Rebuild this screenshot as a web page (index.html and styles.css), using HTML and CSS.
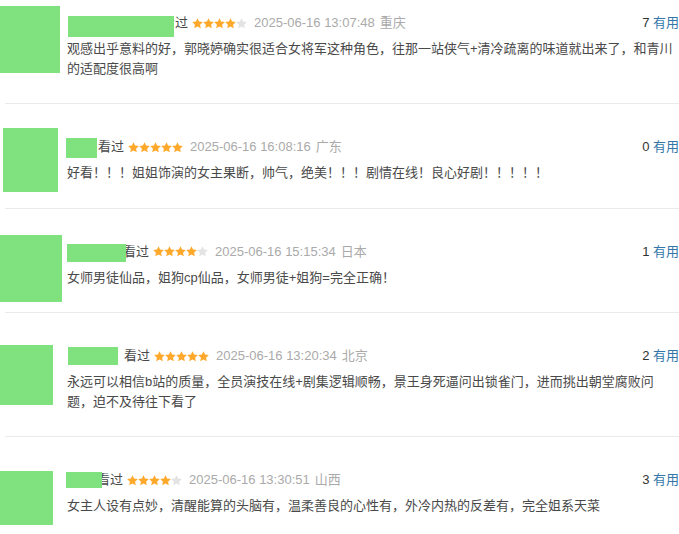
FILE: index.html
```html
<!DOCTYPE html>
<html>
	<head>
		<meta charset="UTF-8">
		<title>短评</title>
		<link rel="stylesheet" href="styles.css">
	</head>
	<body>
		<!-- 星星图形，只定义一次 -->
		<svg class="defs" width="0" height="0">
			<defs>
				<symbol id="star" viewBox="0 0 11 11">
					<polygon points="5.5,0.2 7.09,3.62 10.83,4.07 8.07,6.63 8.79,10.33 5.5,8.5 2.21,10.33 2.93,6.63 0.17,4.07 3.91,3.62"/>
				</symbol>
			</defs>
		</svg>

		<div class="list">
			<!-- 第一条 -->
			<div class="item">
				<div class="pic"><div class="avatar av1"></div></div>
				<div class="main">
					<div class="info">
						<span class="name nm1"></span><span class="watched">看过</span>
						<svg class="stars" width="55" height="11" viewBox="0 0 55 11">
							<use href="#star" x="0" width="11" height="11" class="on"/><use href="#star" x="11" width="11" height="11" class="on"/><use href="#star" x="22" width="11" height="11" class="on"/><use href="#star" x="33" width="11" height="11" class="on"/><use href="#star" x="44" width="11" height="11" class="off"/>
						</svg>
						<span class="time">2025-06-16 13:07:48</span>
						<span class="loc">重庆</span>
						<span class="votes"><span class="num">7</span> <a href="javascript:;">有用</a></span>
					</div>
					<p class="text">观感出乎意料的好，郭晓婷确实很适合女将军这种角色，往那一站侠气+清冷疏离的味道就出来了，和青川的适配度很高啊</p>
				</div>
			</div>

			<!-- 第二条 -->
			<div class="item">
				<div class="pic"><div class="avatar av2"></div></div>
				<div class="main">
					<div class="info">
						<span class="name nm2"></span><span class="watched">看过</span>
						<svg class="stars" width="55" height="11" viewBox="0 0 55 11">
							<use href="#star" x="0" width="11" height="11" class="on"/><use href="#star" x="11" width="11" height="11" class="on"/><use href="#star" x="22" width="11" height="11" class="on"/><use href="#star" x="33" width="11" height="11" class="on"/><use href="#star" x="44" width="11" height="11" class="on"/>
						</svg>
						<span class="time">2025-06-16 16:08:16</span>
						<span class="loc">广东</span>
						<span class="votes"><span class="num">0</span> <a href="javascript:;">有用</a></span>
					</div>
					<p class="text">好看！！！姐姐饰演的女主果断，帅气，绝美！！！剧情在线！良心好剧！！！！！</p>
				</div>
			</div>

			<!-- 第三条 -->
			<div class="item">
				<div class="pic"><div class="avatar av3"></div></div>
				<div class="main">
					<div class="info">
						<span class="name nm3"></span><span class="watched">看过</span>
						<svg class="stars" width="55" height="11" viewBox="0 0 55 11">
							<use href="#star" x="0" width="11" height="11" class="on"/><use href="#star" x="11" width="11" height="11" class="on"/><use href="#star" x="22" width="11" height="11" class="on"/><use href="#star" x="33" width="11" height="11" class="on"/><use href="#star" x="44" width="11" height="11" class="off"/>
						</svg>
						<span class="time">2025-06-16 15:15:34</span>
						<span class="loc">日本</span>
						<span class="votes"><span class="num">1</span> <a href="javascript:;">有用</a></span>
					</div>
					<p class="text">女师男徒仙品，姐狗cp仙品，女师男徒+姐狗=完全正确！</p>
				</div>
			</div>

			<!-- 第四条 -->
			<div class="item">
				<div class="pic"><div class="avatar av4"></div></div>
				<div class="main">
					<div class="info">
						<span class="name nm4"></span><span class="watched">看过</span>
						<svg class="stars" width="55" height="11" viewBox="0 0 55 11">
							<use href="#star" x="0" width="11" height="11" class="on"/><use href="#star" x="11" width="11" height="11" class="on"/><use href="#star" x="22" width="11" height="11" class="on"/><use href="#star" x="33" width="11" height="11" class="on"/><use href="#star" x="44" width="11" height="11" class="on"/>
						</svg>
						<span class="time">2025-06-16 13:20:34</span>
						<span class="loc">北京</span>
						<span class="votes"><span class="num">2</span> <a href="javascript:;">有用</a></span>
					</div>
					<p class="text">永远可以相信b站的质量，全员演技在线+剧集逻辑顺畅，景王身死逼问出锁雀门，进而挑出朝堂腐败问题，迫不及待往下看了</p>
				</div>
			</div>

			<!-- 第五条 -->
			<div class="item">
				<div class="pic"><div class="avatar av5"></div></div>
				<div class="main">
					<div class="info">
						<span class="name nm5"></span><span class="watched">看过</span>
						<svg class="stars" width="55" height="11" viewBox="0 0 55 11">
							<use href="#star" x="0" width="11" height="11" class="on"/><use href="#star" x="11" width="11" height="11" class="on"/><use href="#star" x="22" width="11" height="11" class="on"/><use href="#star" x="33" width="11" height="11" class="on"/><use href="#star" x="44" width="11" height="11" class="off"/>
						</svg>
						<span class="time">2025-06-16 13:30:51</span>
						<span class="loc">山西</span>
						<span class="votes"><span class="num">3</span> <a href="javascript:;">有用</a></span>
					</div>
					<p class="text">女主人设有点妙，清醒能算的头脑有，温柔善良的心性有，外冷内热的反差有，完全姐系天菜</p>
				</div>
			</div>
		</div>
	</body>
</html>
```

FILE: styles.css
```css
*{
	margin: 0;
	padding: 0;
}

body{
	font-family: "Liberation Sans", "Noto Sans CJK SC", sans-serif;
	font-size: 13px;
	color: #494949;
	background-color: #fff;
}

.defs{
	position: absolute;
}

/*列表整体往上卷了一点*/
.list{
	margin-top: -20px;
}

/*每一条短评*/
.item{
	display: flex;
	margin-left: 5px;
	border-bottom: 1px solid #eaeaea;
}

/*头像列*/
.pic{
	width: 62px;
	flex-shrink: 0;
}

.avatar{
	background-color: #80e27e;
	margin-left: -5px;
}

.av1{ width: 60px; height: 67px; margin-top: 26px; }
.av2{ width: 55px; height: 64px; margin-top: 24px; margin-left: -2px; }
.av3{ width: 62px; height: 67px; margin-top: 26px; }
.av4{ width: 53px; height: 60px; margin-top: 32px; }
.av5{ width: 53px; height: 54px; margin-top: 34px; }

/*右侧内容*/
.main{
	flex: 1;
	min-width: 0;
	padding: 33px 0 25px;
}

.info{
	display: flex;
	align-items: center;
	height: 20px;
	line-height: 20px;
	white-space: nowrap;
}

/*用户名打码块，盖在文字上面*/
.name{
	display: inline-block;
	background-color: #80e27e;
	position: relative;
	z-index: 1;
}

.nm1{ width: 106px; height: 21px; margin: 0 -12px 0 1px; top: 3px; }
.nm2{ width: 31px; height: 20px; margin: 0 1px 0 -1px; top: 1px; }
.nm3{ width: 59px; height: 18px; margin: 0 -3px 0 0; top: 1px; }
.nm4{ width: 50px; height: 18px; margin: 0 6px 0 1px; }
.nm5{ width: 36px; height: 16px; margin: 0 -5px 0 -1px; }

.watched{
	color: #494949;
}

.stars{
	margin-left: 4px;
	flex-shrink: 0;
}

.stars .on{
	fill: #ffa92c;
}

.stars .off{
	fill: #e3e3e3;
}

.time{
	margin-left: 7px;
	color: #aaa;
}

.loc{
	margin-left: 5px;
	color: #aaa;
}

.votes{
	margin-left: auto;
	color: #333;
}

.votes a{
	color: #37a;
	text-decoration: none;
}

.text{
	margin-top: 6px;
	line-height: 19.5px;
	color: #494949;
	word-break: break-all;
}
```
